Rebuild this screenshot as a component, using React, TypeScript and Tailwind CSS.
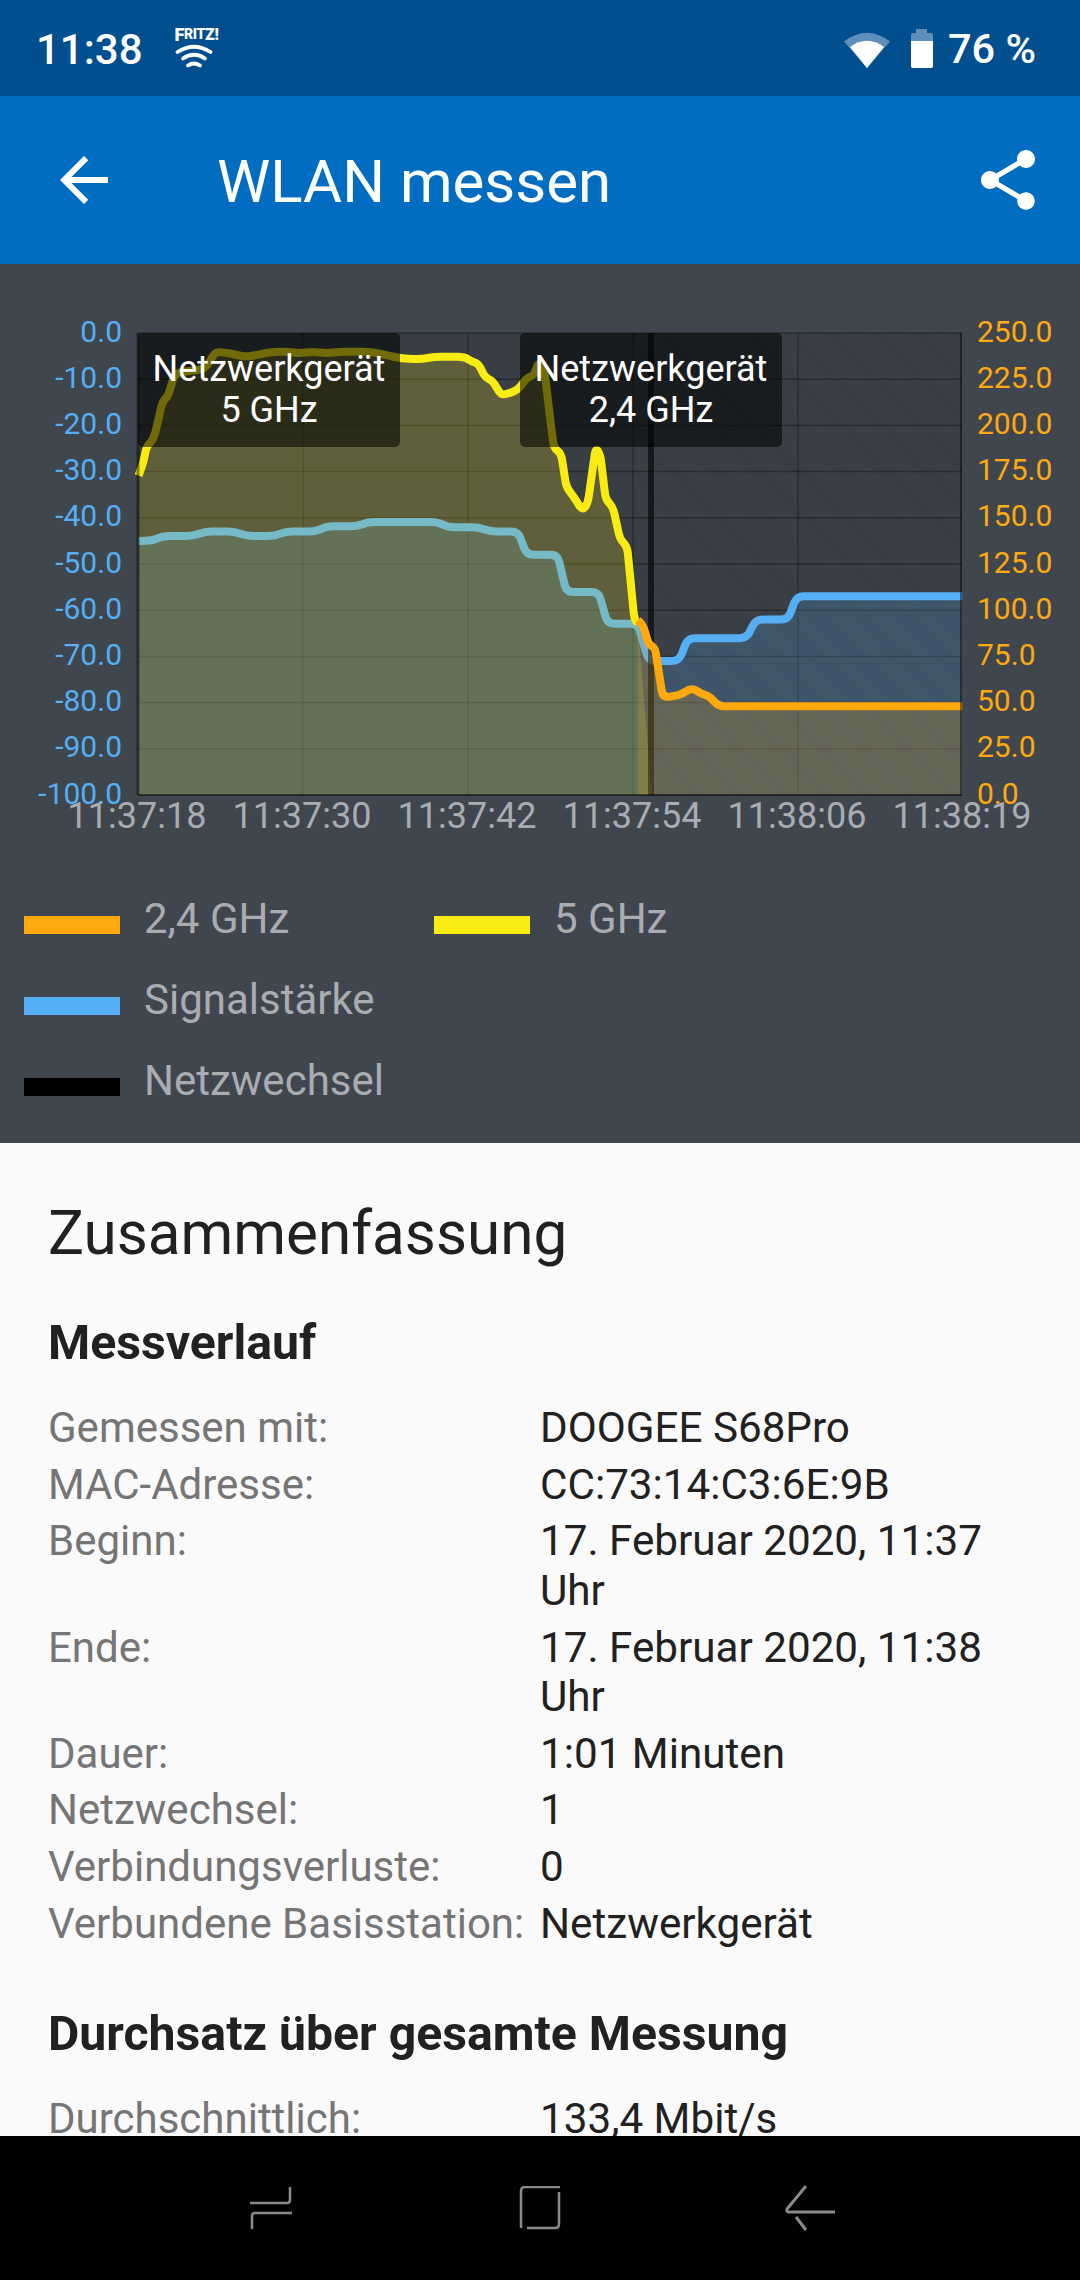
type Pt = [number, number];

// traced from the chart, x / y given in 2.8x / 2.904x crop units
const left = (x: number, y: number): Pt => [x / 2.8, 300 + y / 2.904];
const right = (x: number, y: number): Pt => [520 + x / 2.8, 300 + y / 2.904];

const yellowLine: Pt[] = [
  left(388, 510), left(402, 470), left(410, 425), left(430, 405), left(445, 340), left(455, 295), left(470, 280),
  left(490, 212), left(575, 200), left(600, 155), left(615, 150), left(660, 158), left(685, 165), left(720, 160),
  left(760, 150), left(810, 150), left(835, 155), left(875, 150), left(915, 155), left(950, 150), left(1030, 150),
  left(1060, 155), left(1125, 170), left(1180, 172), left(1215, 165), left(1300, 165), left(1320, 178), left(1340, 185),
  left(1358, 225), left(1380, 235), left(1400, 272), left(1412, 275), left(1450, 262), left(1475, 225), left(1495, 220),
  right(52, 178), right(68, 200), right(85, 350), right(95, 430), right(115, 445), right(130, 545), right(150, 570),
  right(175, 612), right(190, 590), right(212, 428), right(225, 450), right(240, 580), right(260, 600), right(280, 695),
  right(300, 715), right(320, 925), right(330, 940),
];

const blueLine: Pt[] = [
  left(388, 700), left(430, 698), left(455, 685), left(540, 685), left(575, 672), left(655, 672), left(690, 685),
  left(770, 685), left(800, 672), left(885, 672), left(915, 657), left(1000, 657), left(1030, 645), left(1225, 645),
  left(1255, 660), left(1340, 660), left(1370, 672), left(1450, 672), left(1475, 740), right(105, 740), right(130, 848),
  right(220, 848), right(245, 940), right(330, 940), right(360, 1048), right(445, 1048), right(470, 982), right(635, 982),
  right(660, 928), right(750, 928), right(775, 860), right(1238, 860),
];

const orangeLine: Pt[] = [
  right(330, 930), right(345, 945), right(360, 1000), right(378, 1010), right(400, 1155), right(450, 1147), right(480, 1125),
  right(510, 1145), right(530, 1150), right(555, 1180), right(1238, 1180),
];

const PLOT = { left: 138, right: 962, top: 333, bottom: 795 };

const signalTicks = ['0.0', '-10.0', '-20.0', '-30.0', '-40.0', '-50.0', '-60.0', '-70.0', '-80.0', '-90.0', '-100.0'];
const rateTicks = ['250.0', '225.0', '200.0', '175.0', '150.0', '125.0', '100.0', '75.0', '50.0', '25.0', '0.0'];
const timeTicks = ['11:37:18', '11:37:30', '11:37:42', '11:37:54', '11:38:06', '11:38:19'];

const firstRows: [string, string][] = [
  ['Gemessen mit:', 'DOOGEE S68Pro'],
  ['MAC-Adresse:', 'CC:73:14:C3:6E:9B'],
  ['Beginn:', '17. Februar 2020, 11:37 Uhr'],
  ['Ende:', '17. Februar 2020, 11:38 Uhr'],
  ['Dauer:', '1:01 Minuten'],
  ['Netzwechsel:', '1'],
  ['Verbindungsverluste:', '0'],
  ['Verbundene Basisstation:', 'Netzwerkgerät'],
];

// polyline with small fillets, keeps the flat steps of the lines flat
function smooth(points: Pt[], radius = 7) {
  let d = `M${points[0][0]} ${points[0][1]}`;
  for (let i = 1; i < points.length - 1; i++) {
    const [x, y] = points[i];
    const [px, py] = points[i - 1];
    const [nx, ny] = points[i + 1];
    const lenA = Math.hypot(x - px, y - py) || 1;
    const lenB = Math.hypot(nx - x, ny - y) || 1;
    const a = Math.min(radius, lenA / 2) / lenA;
    const b = Math.min(radius, lenB / 2) / lenB;
    d += ` L${x - (x - px) * a} ${y - (y - py) * a} Q${x} ${y} ${x + (nx - x) * b} ${y + (ny - y) * b}`;
  }
  const last = points[points.length - 1];
  return `${d} L${last[0]} ${last[1]}`;
}

function Chart() {
  const rowHeight = (PLOT.bottom - PLOT.top) / 10;
  const yellowEnd = yellowLine[yellowLine.length - 1];
  return (
    <div className="relative h-[620px]">
      <svg width="1080" height="586" viewBox="0 264 1080 586" className="block">
        <defs>
          <pattern id="hatch" width="30" height="30" patternUnits="userSpaceOnUse" patternTransform="rotate(-45)">
            <rect width="15" height="30" fill="#ffffff" fillOpacity="0.012" />
          </pattern>
        </defs>
        <rect x={PLOT.left} y={PLOT.top} width={PLOT.right - PLOT.left} height={PLOT.bottom - PLOT.top} fill="#393e45" />
        <rect x="638" y={PLOT.top} width={PLOT.right - 638} height={PLOT.bottom - PLOT.top} fill="url(#hatch)" />

        {/* grid */}
        {signalTicks.map((_, i) => (
          <line key={i} x1={PLOT.left} x2={PLOT.right} y1={PLOT.top + i * rowHeight} y2={PLOT.top + i * rowHeight} stroke="#000" strokeOpacity="0.3" strokeWidth="1.5" />
        ))}
        {[303, 468, 633, 798].map((x) => (
          <line key={x} x1={x} x2={x} y1={PLOT.top} y2={PLOT.bottom} stroke="#000" strokeOpacity="0.3" strokeWidth="1.5" />
        ))}

        {/* blue sits below yellow, that is why it looks teal on the left */}
        <path
          d={`${smooth(blueLine)} L${PLOT.right} ${PLOT.bottom} L${PLOT.left} ${PLOT.bottom} Z`}
          fill="#56aef5"
          fillOpacity="0.2"
        />
        <path d={smooth(blueLine)} fill="none" stroke="#56aef5" strokeWidth="8" strokeLinejoin="round" />
        <path
          d={`${smooth(yellowLine)} L${yellowEnd[0] + 14} ${PLOT.bottom} L${PLOT.left} ${PLOT.bottom} Z`}
          fill="#f8ec12"
          fillOpacity="0.2"
        />
        <path d={smooth(yellowLine)} fill="none" stroke="#f8ec12" strokeWidth="8" strokeLinejoin="round" />
        <line x1="651" x2="651" y1={PLOT.top} y2={PLOT.bottom} stroke="#000" strokeOpacity="0.6" strokeWidth="6" />
        <path
          d={`${smooth(orangeLine)} L${PLOT.right} ${PLOT.bottom} L${orangeLine[0][0]} ${PLOT.bottom} Z`}
          fill="#ffa90f"
          fillOpacity="0.2"
        />
        <path d={smooth(orangeLine)} fill="none" stroke="#ffa90f" strokeWidth="8" strokeLinejoin="round" />

        {/* plot frame */}
        <line x1={PLOT.left} x2={PLOT.left} y1={PLOT.top} y2={PLOT.bottom} stroke="#000" strokeOpacity="0.45" strokeWidth="3" />
        <line x1={PLOT.right - 1} x2={PLOT.right - 1} y1={PLOT.top} y2={PLOT.bottom} stroke="#000" strokeOpacity="0.45" strokeWidth="2" />
        <line x1={PLOT.left} x2={PLOT.right} y1={PLOT.bottom} y2={PLOT.bottom} stroke="#000" strokeOpacity="0.45" strokeWidth="2" />

        {/* axis labels */}
        <g fontFamily="Roboto, sans-serif" fontSize="30">
          {signalTicks.map((t, i) => (
            <text key={t} x="122" y={PLOT.top + i * rowHeight + 8.5} textAnchor="end" fill="#56aef5">{t}</text>
          ))}
          {rateTicks.map((t, i) => (
            <text key={t} x="977" y={PLOT.top + i * rowHeight + 8.5} fill="#ffa90f">{t}</text>
          ))}
        </g>
        <g fontFamily="Roboto, sans-serif" fontSize="36">
          {timeTicks.map((t, i) => (
            <text key={t} x={137 + i * 165} y="828" textAnchor="middle" fill="#a9adb1">{t}</text>
          ))}
        </g>
      </svg>

      <Tooltip className="left-[138px]" name="5 GHz" />
      <Tooltip className="left-[520px]" name="2,4 GHz" />
    </div>
  );
}

function Tooltip({ className, name }: { className: string; name: string }) {
  return (
    <div className={`absolute top-[69px] flex h-[114px] w-[262px] flex-col items-center justify-center rounded-[5px] bg-black/55 text-center text-[36px] leading-[41px] text-white ${className}`}>
      <span>Netzwerkgerät</span>
      <span>{name}</span>
    </div>
  );
}

function LegendItem({ color, label, className }: { color: string; label: string; className?: string }) {
  return (
    <div className={`flex h-[81px] items-center gap-[24px] ${className ?? ''}`}>
      <span className={`h-[18px] w-[96px] ${color}`} />
      <span className="-mt-[12px] text-[42px] leading-[50px] text-[#a9adb1]">{label}</span>
    </div>
  );
}

function InfoRows({ rows }: { rows: [string, string][] }) {
  return (
    <div className="mt-[32px] flex flex-col gap-[7.2px] leading-[49.5px]">
      {rows.map(([label, value]) => (
        <div key={label} className="flex">
          <span className="w-[492px] shrink-0 text-[42px] text-[#757575]">{label}</span>
          <span className="text-[42.2px] text-[#212121]">{value}</span>
        </div>
      ))}
    </div>
  );
}

function StatusBar() {
  return (
    <div className="flex h-[96px] shrink-0 items-center bg-[#014f8f] pl-[36px] pr-[44px] pt-[3px] text-white">
      <span className="text-[42px] font-medium">11:38</span>
      <div className="ml-[32px] -mt-[6px] flex w-[44px] flex-col items-center">
        <span className="flex items-end text-[14px] leading-[17px] font-black tracking-tight">
          <span className="text-[18px]">F</span>
          <span>RIT</span>
          <span className="text-[16px]">Z!</span>
        </span>
        <svg width="38" height="24" viewBox="0 0 38 24" fill="none" stroke="#fff" strokeWidth="3.8" strokeLinecap="round" className="mt-[1px] -ml-[6px]">
          <path d="M2.5 8 Q19 -2.5 35.5 8" />
          <path d="M8 14.5 Q19 7 30 14.5" />
          <path d="M13 21.5 Q19 17.5 25 21.5" />
        </svg>
      </div>
      <div className="ml-auto flex items-center">
        <svg width="46" height="37" viewBox="0 0 46 37">
          <path d="M0 10.5 Q23 -7 46 10.5 L23 37 Z" fill="#5d8fba" />
          <path d="M6 16 Q23 3.5 40 16 L23 37 Z" fill="#fff" />
        </svg>
        <svg width="22" height="39" viewBox="0 0 22 39" className="ml-[21px] -mt-[2px]">
          <path d="M5 0 H16 V4 H20 Q22 4 22 6 V37 Q22 39 20 39 H2 Q0 39 0 37 V6 Q0 4 2 4 H5 Z" fill="#5d8fba" />
          <path d="M0 12 H22 V37 Q22 39 20 39 H2 Q0 39 0 37 Z" fill="#fff" />
        </svg>
        <span className="ml-[15px] text-[41.5px] font-medium">76 %</span>
      </div>
    </div>
  );
}

function AppBar() {
  return (
    <div className="flex h-[168px] shrink-0 items-center bg-[#016dc1] text-white">
      <svg width="72" height="72" viewBox="0 0 24 24" fill="#fff" className="ml-[48px]">
        <path d="M20 11H7.83l5.59-5.59L12 4l-8 8 8 8 1.41-1.41L7.83 13H20v-2z" />
      </svg>
      <span className="ml-[97px] mt-[4px] text-[60px] leading-none">WLAN messen</span>
      <svg width="72" height="72" viewBox="0 0 24 24" fill="#fff" className="ml-auto mr-[36px]">
        <path d="M18 16.08c-.76 0-1.44.3-1.96.77L8.91 12.7c.05-.23.09-.46.09-.7s-.04-.47-.09-.7l7.05-4.11c.54.5 1.25.81 2.04.81 1.66 0 3-1.34 3-3s-1.34-3-3-3-3 1.34-3 3c0 .24.04.47.09.7L8.04 9.81C7.5 9.31 6.79 9 6 9c-1.66 0-3 1.34-3 3s1.34 3 3 3c.79 0 1.5-.31 2.04-.81l7.12 4.16c-.05.21-.08.43-.08.65 0 1.61 1.31 2.92 2.92 2.92 1.61 0 2.92-1.31 2.92-2.92s-1.31-2.92-2.92-2.92z" />
      </svg>
    </div>
  );
}

function NavBar() {
  return (
    <div className="flex h-[144px] shrink-0 items-center bg-black">
      <svg width="42" height="44" viewBox="0 0 42 44" fill="none" stroke="#8a8a8a" strokeWidth="2.5" className="ml-[250px]">
        <path d="M40 1 V14 Q40 17 37 17 H0" />
        <path d="M42 27 H5 Q2 27 2 30 V43" />
      </svg>
      <svg width="42" height="44" viewBox="0 0 42 44" fill="none" stroke="#8a8a8a" strokeWidth="2.5" className="ml-[227px]">
        <path d="M41 1 H6 Q2 1 2 5 V42" />
        <path d="M40 6 V38 Q40 42 36 42 H8" />
      </svg>
      <svg width="50" height="46" viewBox="0 0 50 46" fill="none" stroke="#8a8a8a" strokeWidth="3" className="ml-[224px]">
        <path d="M21 1 L2 24 Q1 27 4 27 H50" />
        <path d="M11 32 L21 45" />
      </svg>
    </div>
  );
}

export default function App() {
  return (
    <div className="flex h-[2280px] w-[1080px] flex-col overflow-hidden bg-[#fafafa] font-['Roboto',sans-serif]">
      <StatusBar />
      <AppBar />
      <div className="h-[879px] shrink-0 bg-[#40464e]">
        <Chart />
        <div className="flex flex-col px-[24px]">
          <div className="flex">
            <LegendItem color="bg-[#ffa90f]" label="2,4 GHz" className="w-[410px]" />
            <LegendItem color="bg-[#f8ec12]" label="5 GHz" />
          </div>
          <LegendItem color="bg-[#56aef5]" label="Signalstärke" />
          <LegendItem color="bg-black" label="Netzwechsel" />
        </div>
      </div>
      <div className="min-h-0 flex-1 overflow-hidden px-[48px] pt-[58px]">
        <h1 className="text-[60.2px] leading-[66px] text-[#212121]">Zusammenfassung</h1>
        <h2 className="mt-[48px] text-[48.2px] leading-[56px] font-bold text-[#212121]">Messverlauf</h2>
        <InfoRows rows={firstRows} />
        <h2 className="mt-[58px] text-[48.2px] leading-[56px] font-bold text-[#212121]">Durchsatz über gesamte Messung</h2>
        <InfoRows rows={[['Durchschnittlich:', '133,4 Mbit/s']]} />
      </div>
      <NavBar />
    </div>
  );
}
